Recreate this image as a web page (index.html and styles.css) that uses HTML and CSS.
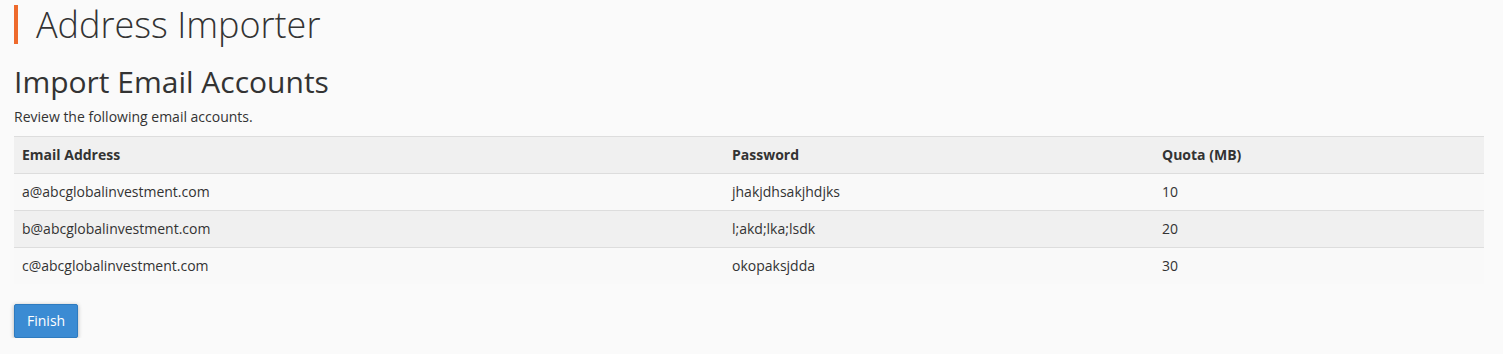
FILE: index.html
```html
<!DOCTYPE html>
<html>
<head>
<meta charset="utf-8">
<link rel="stylesheet" href="styles.css">
</head>
<body>
<div class="page">
  <h1 class="page-title">Address Importer</h1>
  <h2 class="section-title">Import Email Accounts</h2>
  <p class="desc">Review the following email accounts.</p>
  <table class="accounts">
    <colgroup>
      <col class="c-email">
      <col class="c-pass">
      <col class="c-quota">
    </colgroup>
    <thead>
      <tr><th>Email Address</th><th>Password</th><th>Quota (MB)</th></tr>
    </thead>
    <tbody>
      <tr><td>a@abcglobalinvestment.com</td><td>jhakjdhsakjhdjks</td><td>10</td></tr>
      <tr><td>b@abcglobalinvestment.com</td><td>l;akd;lka;lsdk</td><td>20</td></tr>
      <tr><td>c@abcglobalinvestment.com</td><td>okopaksjdda</td><td>30</td></tr>
    </tbody>
  </table>
  <button class="btn-primary" type="button">Finish</button>
</div>
</body>
</html>
```
FILE: styles.css
```css
html, body {
  margin: 0;
  padding: 0;
  background: #fafafa;
}
body {
  font-family: "Open Sans", "Liberation Sans", sans-serif;
  color: #333;
  font-size: 14px;
}
.page {
  padding: 5px 19px 0 14px;
}
.page-title {
  margin: 0;
  font-weight: 300;
  font-size: 36px;
  line-height: 39px;
  border-left: 4px solid #ee6a2c;
  padding-left: 18px;
  color: #333;
}
.section-title {
  margin: 18px 0 0;
  font-weight: 400;
  font-size: 30px;
  line-height: 40px;
  color: #333;
}
.desc {
  margin: 5px 0 0;
  line-height: 20px;
}
.accounts {
  width: 100%;
  border-collapse: collapse;
  margin-top: 9px;
  table-layout: fixed;
}
.c-email { width: 710px; }
.c-pass { width: 430px; }
.accounts th, .accounts td {
  text-align: left;
  padding: 8px 8px;
  line-height: 20px;
  border-top: 1px solid #ddd;
}
.accounts th {
  font-weight: 700;
  background: #f0f0f0;
}
.accounts tbody tr td {
  background: #f9f9f9;
}
.accounts tbody tr:nth-child(even) td {
  background: #f0f0f0;
}
.btn-primary {
  margin-top: 20px;
  font-family: inherit;
  font-size: 14px;
  line-height: 20px;
  padding: 6px 12px;
  color: #fff;
  background: #3b8bd3;
  border: 1px solid #2e7bbf;
  border-radius: 2px;
  box-shadow: 0 1px 4px rgba(0,0,0,0.3);
}
```
